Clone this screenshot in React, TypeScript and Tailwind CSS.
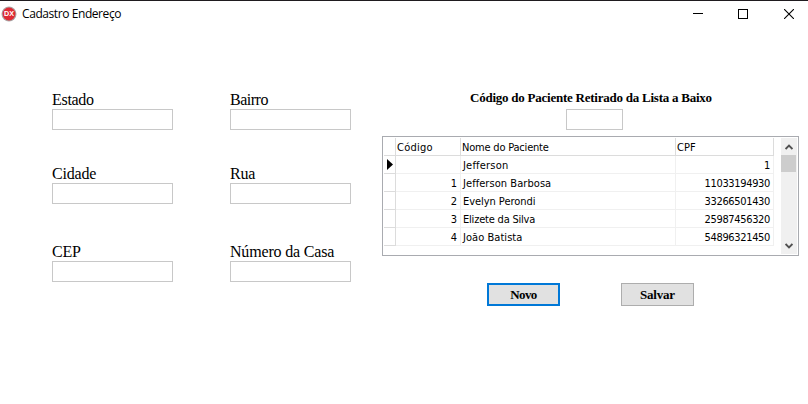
import React from "react";

type FieldProps = { label: string; tracking?: string };

function Field({ label, tracking = "" }: FieldProps) {
  return (
    <label className="flex w-[121px] flex-col">
      <span className={`h-[18px] whitespace-nowrap text-[16px] leading-[18px] ${tracking}`}>{label}</span>
      <input className="h-[21px] w-full border border-[#c8c8c8] bg-white px-1 text-sm outline-none" />
    </label>
  );
}

const patients = [
  { code: "", name: "Jefferson", cpf: "1", nameTracking: "tracking-[0.2px]" },
  { code: "1", name: "Jefferson Barbosa", cpf: "11033194930", nameTracking: "tracking-[0.06px]" },
  { code: "2", name: "Evelyn Perondi", cpf: "33266501430", nameTracking: "tracking-[-0.05px]" },
  { code: "3", name: "Elizete da Silva", cpf: "25987456320", nameTracking: "tracking-[-0.2px]" },
  { code: "4", name: "João Batista", cpf: "54896321450", nameTracking: "tracking-[0.05px]" },
];

function TitleBar() {
  return (
    <header className="flex h-[26px] items-center border-t border-[#1f1b1f] bg-white pl-[1px]">
      <svg width="16" height="16" viewBox="0 0 16 16" className="shrink-0">
        <circle cx="8" cy="8" r="7.5" fill="#aaa6a6" />
        <circle cx="8" cy="8" r="6.4" fill="#df2a35" />
        <text x="3" y="10.4" textLength="10" lengthAdjust="spacingAndGlyphs" fontFamily="Liberation Sans, sans-serif" fontSize="7" fontWeight="700" fill="#fff">
          DX
        </text>
      </svg>
      <h1 className="ml-[5px] whitespace-nowrap font-['Open_Sans','Noto_Sans',sans-serif] text-[12px] leading-4 font-normal tracking-[-0.42px]">
        Cadastro Endereço
      </h1>
      <div className="ml-auto flex h-full">
        <button className="flex h-full w-[45px] items-center justify-center" aria-label="Minimizar">
          <svg width="10" height="10" viewBox="0 0 10 10" shapeRendering="crispEdges">
            <path d="M0 4.5H10" stroke="#000" />
          </svg>
        </button>
        <button className="flex h-full w-[45px] items-center justify-center" aria-label="Maximizar">
          <svg width="10" height="10" viewBox="0 0 10 10" shapeRendering="crispEdges">
            <path d="M.5 .5H9.5V9.5H.5Z" stroke="#000" fill="none" />
          </svg>
        </button>
        <button className="flex h-full w-[43px] items-center pl-[19px]" aria-label="Fechar">
          <svg width="10" height="10" viewBox="0 0 10 10">
            <path d="M0 0L10 10M10 0L0 10" stroke="#000" strokeWidth="1.1" />
          </svg>
        </button>
      </div>
    </header>
  );
}

function PatientGrid() {
  return (
    <div className="flex h-[120px] w-[417px] justify-between border border-[#a9abb0] bg-white p-px font-['DejaVu_Sans_Condensed','DejaVu_Sans',sans-serif] text-[11px] leading-[15px]">
      <div className="w-[390px]">
        <div className="grid h-[18px] grid-cols-[12px_65px_215px_98px]">
          <div className="border-r border-b border-[#dcdcdc]" />
          <div className="border-r border-b border-[#dcdcdc] pt-[2px] pl-px tracking-[0.25px]">Código</div>
          <div className="border-r border-b border-[#dcdcdc] pt-[2px] pl-px tracking-[-0.2px]">Nome do Paciente</div>
          <div className="border-r border-b border-[#dcdcdc] pt-[2px] pl-px">CPF</div>
        </div>
        {patients.map((p, i) => (
          <div key={p.name} className="grid h-[18px] grid-cols-[12px_65px_215px_98px]">
            <div className="flex items-center border-r border-b border-[#dcdcdc] pl-[3px]">
              {i === 0 && (
                <svg width="6" height="11" viewBox="0 0 6 11" className="shrink-0">
                  <path d="M0 0L6 5.5L0 11Z" fill="#000" />
                </svg>
              )}
            </div>
            <div className="border-r border-b border-[#f0f0f0] pt-[2px] pr-[3px] text-right">{p.code}</div>
            <div className={`border-r border-b border-[#f0f0f0] pt-[2px] pl-[2px] ${p.nameTracking}`}>{p.name}</div>
            <div className="border-r border-b border-[#f0f0f0] pt-[2px] pr-[3px] text-right tracking-[-0.35px]">{p.cpf}</div>
          </div>
        ))}
      </div>
      <div className="flex w-4 flex-col bg-[#f0f0f0]">
        <div className="flex h-[17px] items-center justify-center">
          <svg width="8" height="6" viewBox="0 0 8 6">
            <path d="M.6 5L4 1.6L7.4 5" stroke="#505050" strokeWidth="1.8" fill="none" />
          </svg>
        </div>
        <div className="h-[17px] w-[15px] bg-[#cdcdcd]" />
        <div className="mt-auto flex h-[17px] items-center justify-center">
          <svg width="8" height="6" viewBox="0 0 8 6">
            <path d="M.6 1L4 4.4L7.4 1" stroke="#505050" strokeWidth="1.8" fill="none" />
          </svg>
        </div>
      </div>
    </div>
  );
}

export default function App() {
  return (
    <div className="h-[404px] w-[808px] overflow-hidden bg-white font-['Liberation_Serif',serif] text-black">
      <TitleBar />
      <main className="flex pl-[52px]">
        <section className="flex w-[330px] flex-col pt-[65px]">
          <div className="flex h-[74px] gap-[57px]">
            <Field label="Estado" tracking="tracking-[-0.3px]" />
            <Field label="Bairro" tracking="tracking-[-0.5px]" />
          </div>
          <div className="flex h-[78px] gap-[57px]">
            <Field label="Cidade" tracking="tracking-[-0.2px]" />
            <Field label="Rua" tracking="tracking-[-0.2px]" />
          </div>
          <div className="flex gap-[57px]">
            <Field label="CEP" tracking="tracking-[-0.2px]" />
            <Field label="Número da Casa" tracking="tracking-[-0.18px]" />
          </div>
        </section>
        <section className="flex w-[417px] flex-col pt-[63px]">
          <label className="flex flex-col">
            <span className="ml-[88px] h-5 whitespace-nowrap text-[13px] leading-[18px] font-bold tracking-[-0.24px]">
              Código do Paciente Retirado da Lista a Baixo
            </span>
            <input className="ml-[184px] h-[21px] w-[57px] border border-[#c8c8c8] bg-white px-1 text-sm outline-none" />
          </label>
          <div className="mt-[6px]">
            <PatientGrid />
          </div>
          <div className="mt-[27px] flex gap-[61px] pl-[105px] text-[13px] leading-[18px] font-bold">
            <button className="flex h-[23px] w-[73px] items-center justify-center border-2 border-[#0078d7] bg-[#e1e1e1] tracking-[-0.6px]">Novo</button>
            <button className="flex h-[23px] w-[73px] items-center justify-center border border-[#adadad] bg-[#e1e1e1] tracking-[-0.2px]">Salvar</button>
          </div>
        </section>
      </main>
    </div>
  );
}
